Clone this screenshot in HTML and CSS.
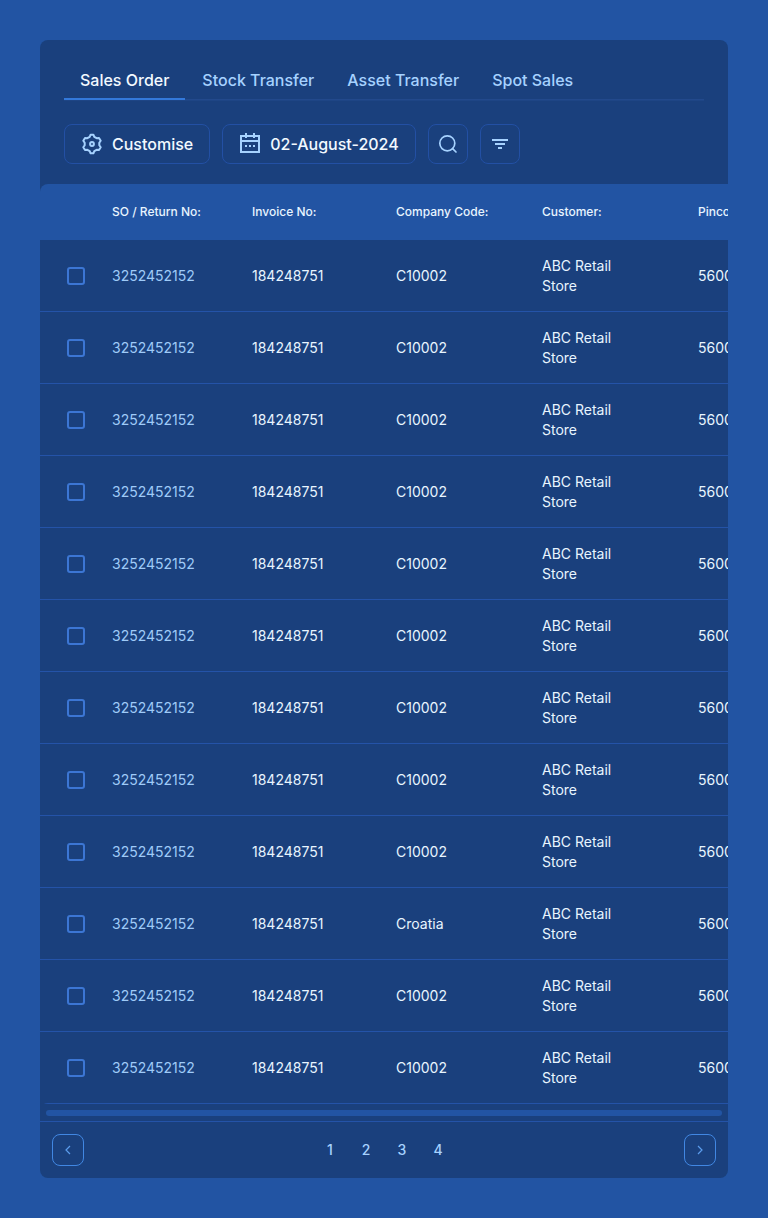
FILE: index.html
```html
<!DOCTYPE html>
<html lang="en">
<head>
<meta charset="utf-8">
<meta name="viewport" content="width=device-width, initial-scale=1">
<title>Sales Order</title>
<link rel="stylesheet" href="styles.css">
</head>
<body>
<main class="panel">
  <nav class="tabs" aria-label="Order types">
    <a class="tab tab-active" href="#sales" aria-current="page">Sales Order</a>
    <a class="tab" href="#stock">Stock Transfer</a>
    <a class="tab" href="#asset">Asset Transfer</a>
    <a class="tab" href="#spot">Spot Sales</a>
  </nav>
  <div class="toolbar">
    <button class="button" type="button">
      <svg class="icon" viewBox="0 0 24 24" aria-hidden="true"><path d="M9.7 4.8 10.6 2.7h2.8l.9 2.1 2.3 1.4 2.4-.3 1.7 2.8-1.4 2v2.6l1.4 2-1.7 2.8-2.4-.3-2.3 1.4-.9 2.1h-2.8l-.9-2.1-2.3-1.4-2.4.3-1.7-2.8 1.4-2v-2.6l-1.4-2L5 5.9l2.4.3z"/><circle cx="12" cy="12" r="1.9"/></svg>
      Customise
    </button>
    <button class="button" type="button">
      <svg class="icon icon-square" viewBox="0 0 24 24" aria-hidden="true"><path d="M3 4h18v16H3zM3 9h18M8 1v5M16 1v5M7 14h2M11 14h2M15 14h2"/></svg>
      02-August-2024
    </button>
    <button class="button button-icon" type="button" aria-label="Search">
      <svg class="icon icon-thin" viewBox="0 0 24 24" aria-hidden="true"><circle cx="11.3" cy="11.3" r="7.5"/><path d="m16.6 16.6 3.4 3.4"/></svg>
    </button>
    <button class="button button-icon" type="button" aria-label="Filter">
      <svg class="icon icon-square" viewBox="0 0 24 24" aria-hidden="true"><path d="M4 8h16M7 12h10M10 16h4"/></svg>
    </button>
  </div>
  <div class="table-wrap">
    <table class="orders">
      <colgroup><col class="col-check"><col class="col-order"><col class="col-invoice"><col class="col-company"><col class="col-customer"><col class="col-pin"></colgroup>
      <thead><tr><th></th><th>SO / Return No:</th><th>Invoice No:</th><th>Company Code:</th><th>Customer:</th><th>Pincode:</th></tr></thead>
      <tbody>
        <tr><td><input class="check" type="checkbox" aria-label="Select order 1"></td><td><a class="order-link" href="#order-1">3252452152</a></td><td>184248751</td><td>C10002</td><td>ABC Retail Store</td><td>560001</td></tr>
        <tr><td><input class="check" type="checkbox" aria-label="Select order 2"></td><td><a class="order-link" href="#order-2">3252452152</a></td><td>184248751</td><td>C10002</td><td>ABC Retail Store</td><td>560001</td></tr>
        <tr><td><input class="check" type="checkbox" aria-label="Select order 3"></td><td><a class="order-link" href="#order-3">3252452152</a></td><td>184248751</td><td>C10002</td><td>ABC Retail Store</td><td>560001</td></tr>
        <tr><td><input class="check" type="checkbox" aria-label="Select order 4"></td><td><a class="order-link" href="#order-4">3252452152</a></td><td>184248751</td><td>C10002</td><td>ABC Retail Store</td><td>560001</td></tr>
        <tr><td><input class="check" type="checkbox" aria-label="Select order 5"></td><td><a class="order-link" href="#order-5">3252452152</a></td><td>184248751</td><td>C10002</td><td>ABC Retail Store</td><td>560001</td></tr>
        <tr><td><input class="check" type="checkbox" aria-label="Select order 6"></td><td><a class="order-link" href="#order-6">3252452152</a></td><td>184248751</td><td>C10002</td><td>ABC Retail Store</td><td>560001</td></tr>
        <tr><td><input class="check" type="checkbox" aria-label="Select order 7"></td><td><a class="order-link" href="#order-7">3252452152</a></td><td>184248751</td><td>C10002</td><td>ABC Retail Store</td><td>560001</td></tr>
        <tr><td><input class="check" type="checkbox" aria-label="Select order 8"></td><td><a class="order-link" href="#order-8">3252452152</a></td><td>184248751</td><td>C10002</td><td>ABC Retail Store</td><td>560001</td></tr>
        <tr><td><input class="check" type="checkbox" aria-label="Select order 9"></td><td><a class="order-link" href="#order-9">3252452152</a></td><td>184248751</td><td>C10002</td><td>ABC Retail Store</td><td>560001</td></tr>
        <tr><td><input class="check" type="checkbox" aria-label="Select order 10"></td><td><a class="order-link" href="#order-10">3252452152</a></td><td>184248751</td><td>Croatia</td><td>ABC Retail Store</td><td>560001</td></tr>
        <tr><td><input class="check" type="checkbox" aria-label="Select order 11"></td><td><a class="order-link" href="#order-11">3252452152</a></td><td>184248751</td><td>C10002</td><td>ABC Retail Store</td><td>560001</td></tr>
        <tr><td><input class="check" type="checkbox" aria-label="Select order 12"></td><td><a class="order-link" href="#order-12">3252452152</a></td><td>184248751</td><td>C10002</td><td>ABC Retail Store</td><td>560001</td></tr>
      </tbody>
    </table>
  </div>
  <div class="scroll-area"><div class="scroll-bar"></div></div>
  <nav class="pager" aria-label="Pages">
    <button class="pager-step" type="button" aria-label="Previous page"><svg class="chevron" viewBox="0 0 16 16" aria-hidden="true"><path d="m10 4-4 4 4 4"/></svg></button>
    <div class="pages"><a class="page" href="#1">1</a><a class="page" href="#2">2</a><a class="page" href="#3">3</a><a class="page" href="#4">4</a></div>
    <button class="pager-step" type="button" aria-label="Next page"><svg class="chevron" viewBox="0 0 16 16" aria-hidden="true"><path d="m6 4 4 4-4 4"/></svg></button>
  </nav>
</main>
</body>
</html>
```
FILE: styles.css
```css
:root {
  --blue: #2254a3;
  --navy: #1a407d;
  --line: #2350a4;
  --sky: #a6d2ff;
  --pale: #e8f5ff;
}

* { box-sizing: border-box; }

body {
  margin: 0;
  padding: 40px;
  background: var(--blue);
  color: var(--pale);
  font-family: Inter, "Liberation Sans", sans-serif;
  font-size: 14px;
  line-height: 20px;
}

a { color: inherit; text-decoration: none; }

button {
  padding: 0;
  background: none;
  color: inherit;
  font: inherit;
}

.panel {
  overflow: hidden;
  background: var(--navy);
  border-radius: 8px;
}

.tabs {
  display: flex;
  gap: 1px;
  margin: 20px 24px 0;
  box-shadow: inset 0 -1px #22498c, 0 1px #1e4585;
}

.tab {
  padding: 8px 16px 6px;
  border-bottom: 2px solid transparent;
  color: var(--sky);
  font-size: 16px;
  font-weight: 500;
  line-height: 24px;
  white-space: nowrap;
}

.tab-active {
  border-color: #3379db;
  color: #f2f9ff;
}

.toolbar {
  display: flex;
  gap: 12px;
  padding: 24px 24px 20px;
}

.button {
  display: flex;
  align-items: center;
  justify-content: center;
  gap: 8px;
  height: 40px;
  padding: 0 16px 0 15px;
  border: 1px solid var(--line);
  border-radius: 8px;
  color: #f2f9ff;
  font-size: 16px;
  font-weight: 500;
  white-space: nowrap;
}

.button-icon {
  width: 40px;
  padding: 0;
}

.icon {
  width: 24px;
  height: 24px;
  fill: none;
  stroke: var(--sky);
  stroke-width: 2;
  stroke-linejoin: round;
  stroke-linecap: round;
}

.icon-square {
  stroke-linecap: butt;
  stroke-linejoin: miter;
}

.icon-thin { stroke-width: 1.7; }

.table-wrap {
  overflow: hidden;
  border-radius: 8px 0 0 8px;
}

.orders {
  width: 100%;
  min-width: 800px;
  table-layout: fixed;
  border-collapse: separate;
  border-spacing: 0;
}

.col-check { width: 72px; }
.col-order { width: 140px; }
.col-invoice { width: 144px; }
.col-company { width: 146px; }
.col-customer { width: 156px; }

.orders th {
  height: 56px;
  padding: 0;
  background: var(--blue);
  font-size: 12px;
  font-weight: 500;
  text-align: left;
}

.orders td {
  height: 72px;
  padding: 0 60px 0 0;
  border-bottom: 1px solid #2453a8;
}

.orders td:first-child {
  padding: 0;
  text-align: center;
}

.order-link { color: #9fcbf8; }

.check {
  display: block;
  width: 18px;
  height: 18px;
  margin: 0 auto;
  appearance: none;
  border: 2px solid #3c76d4;
  border-radius: 3px;
}

.scroll-area {
  padding: 6px 6px 5px;
  border-bottom: 1px solid #2453a8;
}

.scroll-bar {
  height: 6px;
  background: var(--blue);
  border-radius: 3px;
}

.pager {
  display: flex;
  align-items: center;
  justify-content: space-between;
  padding: 12px;
}

.pager-step {
  display: grid;
  place-items: center;
  width: 32px;
  height: 32px;
  border: 1px solid #4187e2;
  border-radius: 8px;
}

.chevron {
  width: 16px;
  height: 16px;
  fill: none;
  stroke: #5b9cec;
  stroke-width: 1.2;
}

.pages { display: flex; }

.page {
  width: 36px;
  color: var(--sky);
  font-weight: 500;
  text-align: center;
}
```
